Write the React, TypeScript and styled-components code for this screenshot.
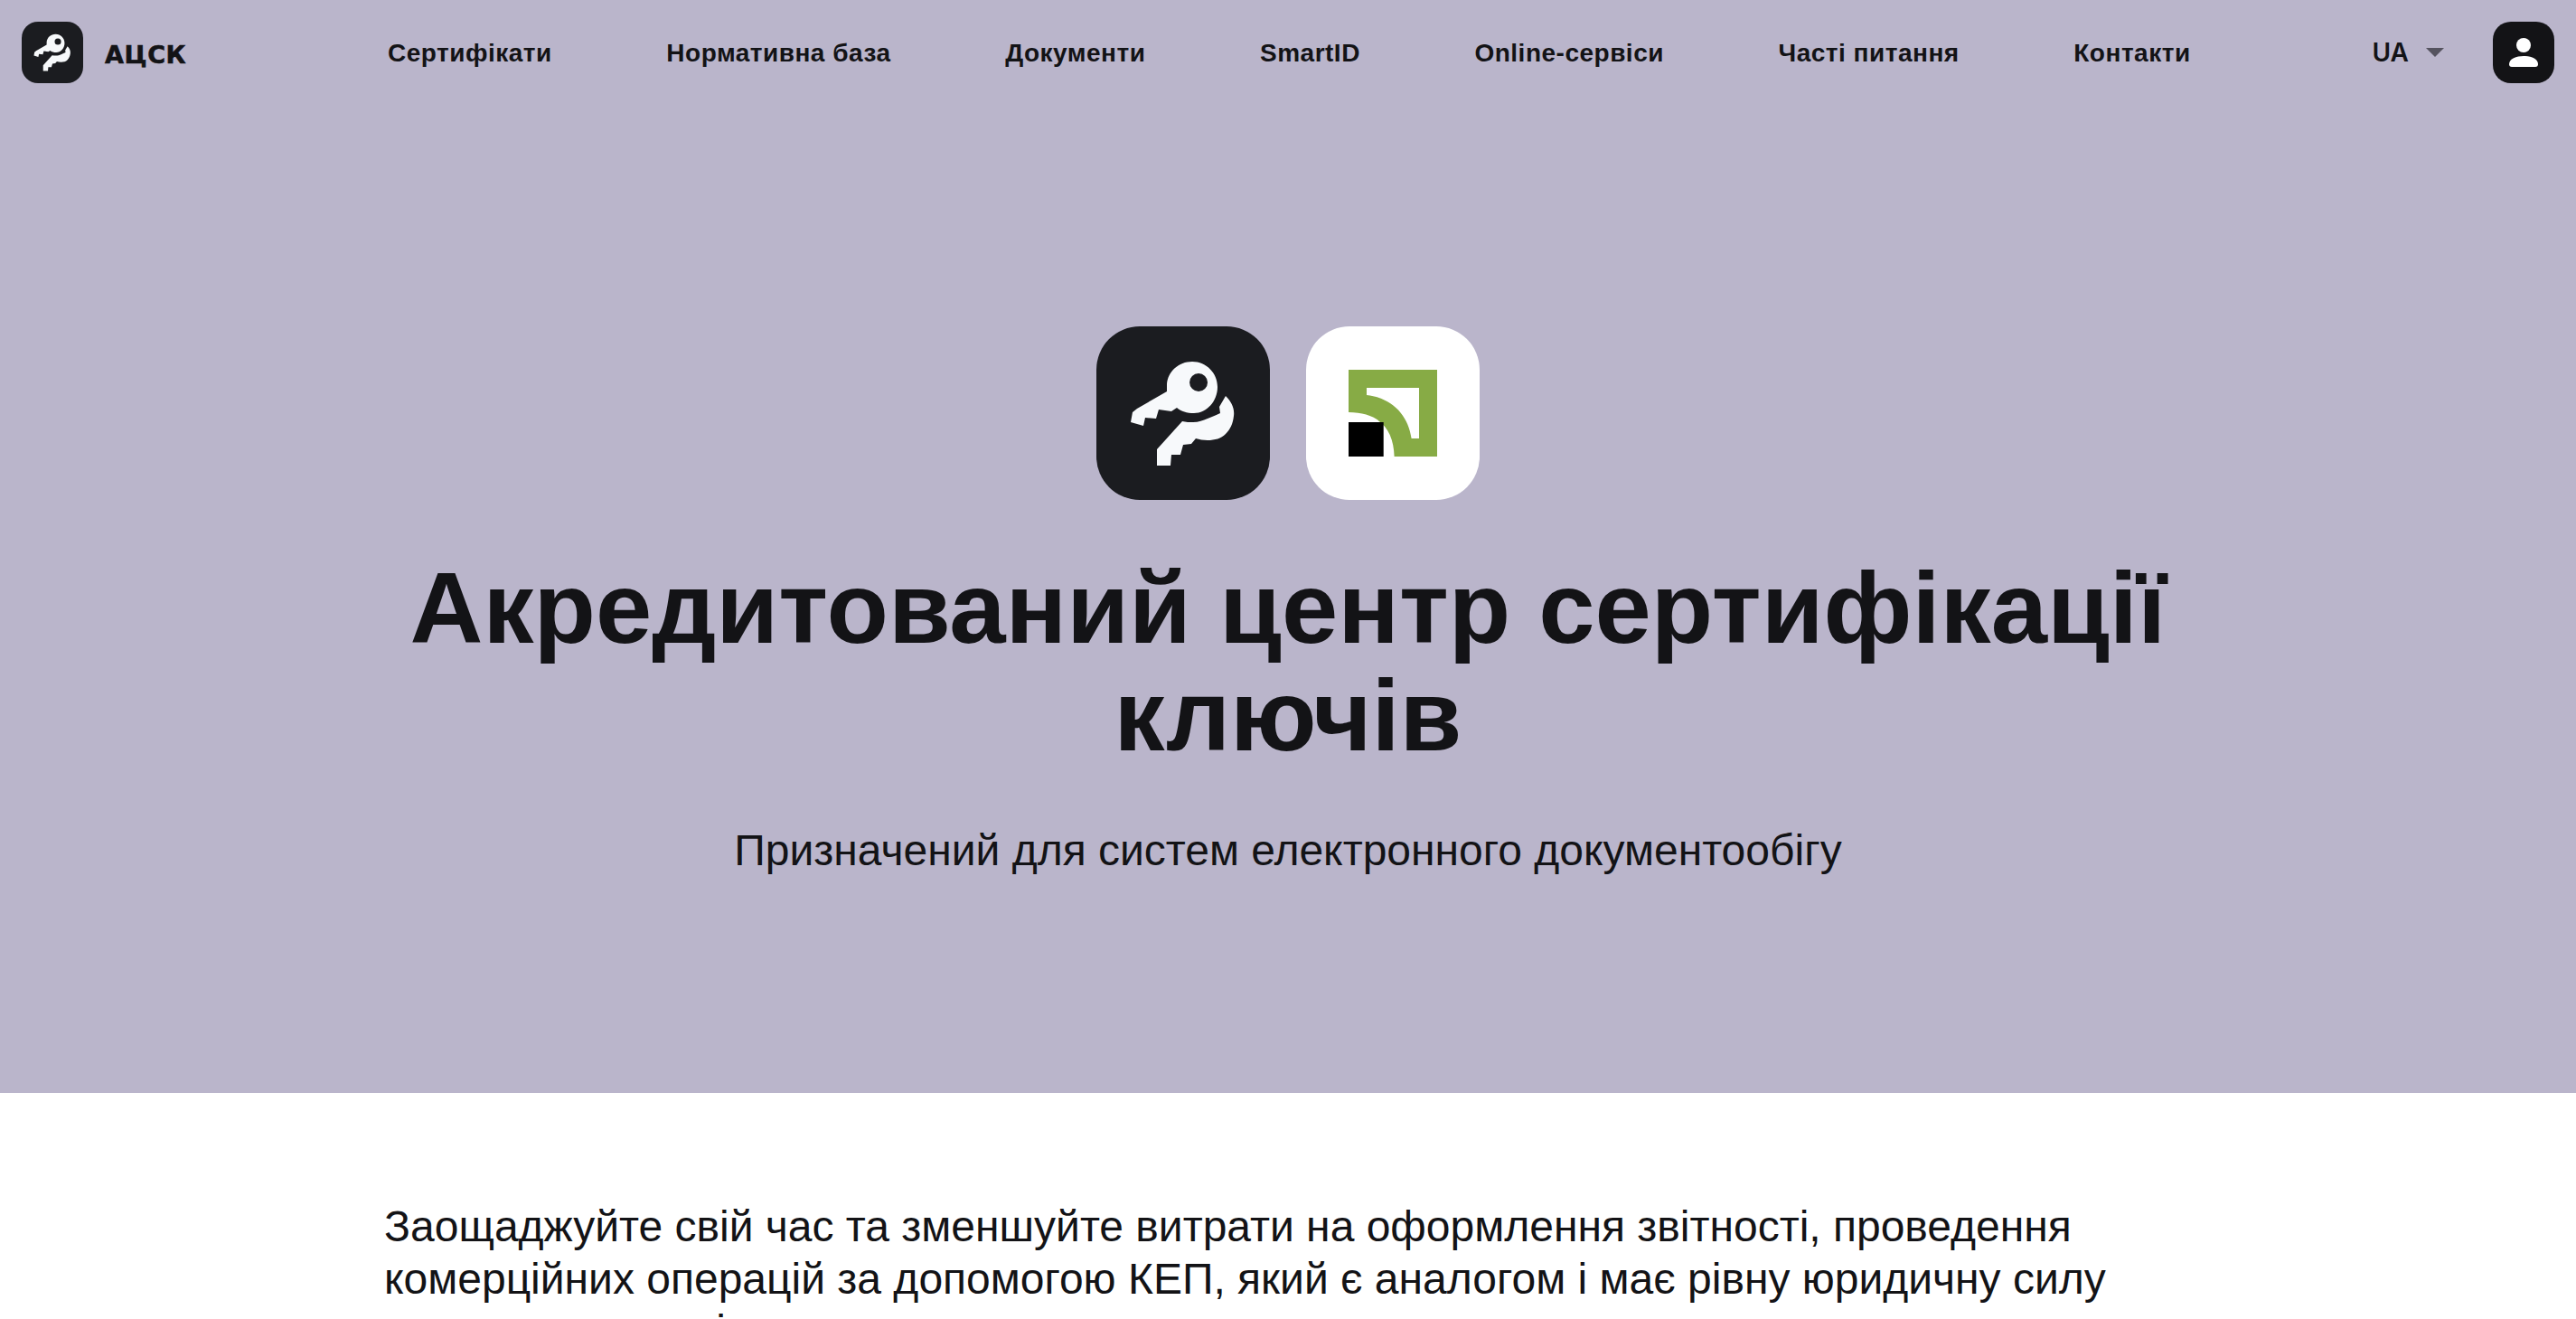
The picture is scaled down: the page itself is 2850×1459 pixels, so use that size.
import styled, { createGlobalStyle } from "styled-components";

const GlobalStyle = createGlobalStyle`
  html, body {
    margin: 0;
    padding: 0;
    background: #fff;
    overflow: hidden;
    font-family: "Liberation Sans", Arial, sans-serif;
  }
`;

const Hero = styled.section`
  background: #bab5cb;
  height: 1209px;
  display: flex;
  flex-direction: column;
`;

const Header = styled.header`
  height: 116px;
  padding: 0 24px;
  display: flex;
  align-items: center;
  box-sizing: border-box;
`;

const Brand = styled.a`
  display: flex;
  align-items: center;
  gap: 24px;
  width: 405px;
  font-family: "DejaVu Sans", sans-serif;
  font-size: 27px;
  font-weight: 700;
  letter-spacing: 0.6px;
  -webkit-text-stroke: 0.6px #131316;
  color: #131316;
`;

const BrandLabel = styled.span`
  padding-top: 4px;
`;

const BrandIcon = styled.span`
  width: 68px;
  height: 68px;
  border-radius: 18px;
  background: #1b1c20;
  display: flex;
  align-items: center;
  justify-content: center;
`;

const Nav = styled.nav`
  display: flex;
  gap: 126.6px;
  flex: 1;
  padding-top: 2px;
`;

const NavLink = styled.a`
  font-size: 28px;
  font-weight: 700;
  letter-spacing: 0.5px;
  color: #131316;
  white-space: nowrap;
`;

const Lang = styled.div`
  display: flex;
  align-items: center;
  gap: 19px;
  font-family: Inter, sans-serif;
  font-size: 28px;
  font-weight: 600;
  color: #131316;
  margin-right: 54px;
`;

const Caret = styled.span`
  width: 0;
  height: 0;
  border-left: 10px solid transparent;
  border-right: 10px solid transparent;
  border-top: 10px solid #55535f;
`;

const UserButton = styled.button`
  width: 68px;
  height: 68px;
  padding: 0;
  border: 0;
  border-radius: 20px;
  background: #131316;
  display: flex;
  align-items: center;
  justify-content: center;
`;

const HeroBody = styled.div`
  display: flex;
  flex-direction: column;
  align-items: center;
  padding-top: 245px;
`;

const Logos = styled.div`
  display: flex;
  gap: 40px;
`;

const LogoTile = styled.div<{ $dark?: boolean }>`
  width: 192px;
  height: 192px;
  border-radius: 48px;
  background: ${(p) => (p.$dark ? "#1b1c20" : "#fff")};
  display: flex;
  align-items: center;
  justify-content: center;
`;

const Title = styled.h1`
  margin: 60px 0 0;
  width: 2100px;
  text-align: center;
  font-size: 112px;
  line-height: 119px;
  font-weight: 700;
  color: #131316;
`;

const Subtitle = styled.p`
  margin: 62px 0 0;
  font-size: 48px;
  line-height: 56px;
  color: #131316;
`;

const Content = styled.main`
  padding: 119px 425px 0;
`;

const Lead = styled.p`
  margin: 0;
  font-size: 48px;
  line-height: 57.6px;
  color: #131316;
`;

function KeysIcon({ size }: { size: number }) {
  return (
    <svg width={size} height={size} viewBox="0 0 192 192">
      <path
        fill="#f7f9fb"
        fillRule="evenodd"
        d="M78 64C79 50 91 39 106 39C122 39 134 52 134 67C134 83 122 96 108 96C100 96 94 94 89 90L83 94L69 92L66 102L54 101L52 110L38 106L40 95L45 91L78 72Z M113 52A10 10 0 1 0 113.1 72A10 10 0 1 0 113 52Z"
      />
      <path
        fill="#f7f9fb"
        d="M143 77C150 84 153 91 152 99C151 108 148 114 143 119C138 124 131 126 123 126C118 126 114 125 110 124L105 130L96 131L93 142L83 142L82 154H67V136L95 105C99 106 103 106 107 106C113 106 118 104 123 102C128 100 133 98 137 96L136 89Z"
      />
    </svg>
  );
}

function BankLogo() {
  return (
    <svg width="98" height="96" viewBox="0 0 98 96">
      <path
        fill="#87ab45"
        fillRule="evenodd"
        d="M0 0H98V96H50.6C50 66 34 47 0 47ZM20 20V28C48 31 66 50 69.6 76H78V20Z"
      />
      <rect x="0" y="58" width="38.7" height="38" fill="#000" />
    </svg>
  );
}

const navItems = [
  "Сертифікати",
  "Нормативна база",
  "Документи",
  "SmartID",
  "Online-сервіси",
  "Часті питання",
  "Контакти",
];

export default function App() {
  return (
    <>
      <GlobalStyle />
      <Hero>
        <Header>
          <Brand>
            <BrandIcon>
              <KeysIcon size={68} />
            </BrandIcon>
            <BrandLabel>АЦСК</BrandLabel>
          </Brand>
          <Nav>
            {navItems.map((item) => (
              <NavLink key={item}>{item}</NavLink>
            ))}
          </Nav>
          <Lang>
            UA
            <Caret />
          </Lang>
          <UserButton aria-label="Профіль">
            <svg width="36" height="36" viewBox="0 0 36 36">
              <circle cx="18" cy="10" r="8" fill="#fff" />
              <path d="M2 31C2 25 10 22 18 22S34 25 34 31C34 33 33 34 31 34H5C3 34 2 33 2 31Z" fill="#fff" />
            </svg>
          </UserButton>
        </Header>
        <HeroBody>
          <Logos>
            <LogoTile $dark>
              <KeysIcon size={192} />
            </LogoTile>
            <LogoTile>
              <BankLogo />
            </LogoTile>
          </Logos>
          <Title>Акредитований центр сертифікації ключів</Title>
          <Subtitle>Призначений для систем електронного документообігу</Subtitle>
        </HeroBody>
      </Hero>
      <Content>
        <Lead>
          Заощаджуйте свій час та зменшуйте витрати на оформлення звітності, проведення
          комерційних операцій за допомогою КЕП, який є аналогом і має рівну юридичну силу
          власноручного підпису
        </Lead>
      </Content>
    </>
  );
}
